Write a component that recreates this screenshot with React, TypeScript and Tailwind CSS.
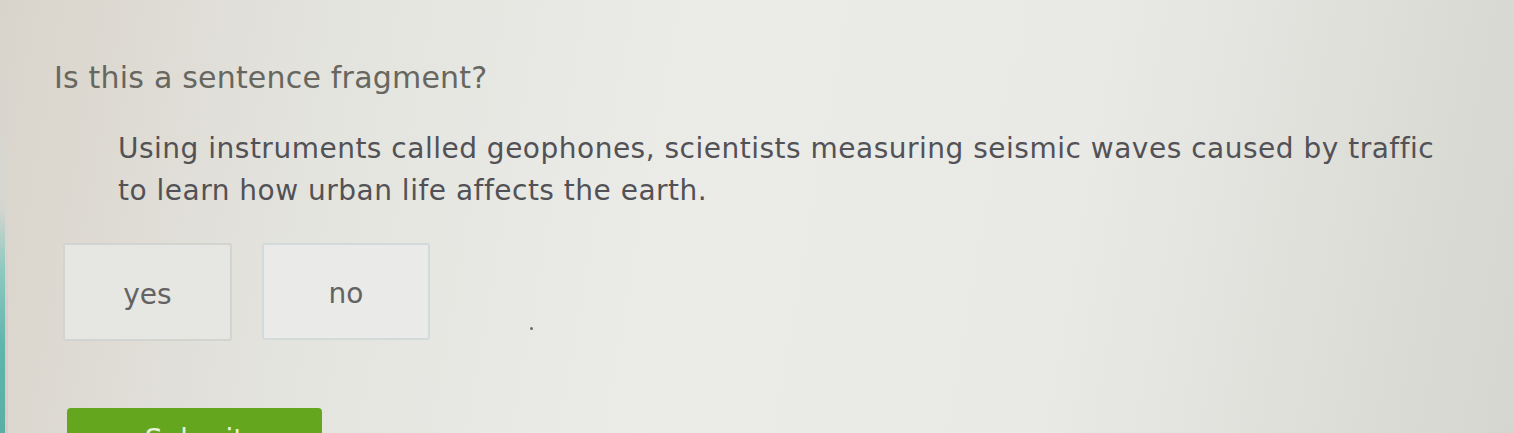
import React from "react";

const font = { fontFamily: '"DejaVu Sans", Verdana, sans-serif' };

export default function App() {
  return (
    <div
      className="relative flex h-[433px] w-[1514px] overflow-hidden bg-[linear-gradient(100deg,#d9d4cb_0%,#e4e4df_22%,#ebebe8_45%,#e9e9e6_70%,#d6d6d0_100%)]"
      style={font}
    >
      {/* bezel edge on the left */}
      <div className="w-[5px] shrink-0 bg-[linear-gradient(180deg,#d9d4cb_0%,#d6d6d0_48%,#8fc9bf_62%,#5fb5ac_80%,#5aaea6_100%)]" />
      <div className="w-[3px] shrink-0 bg-[linear-gradient(180deg,#d9d4cb_0%,#d8d6d2_55%,#dcc9c9_75%,#dcc9c9_100%)]" />

      <div className="flex flex-1 flex-col pl-[46px] pt-[59px]">
        <h1 className="text-[30px] leading-[38px] tracking-[0.2px] text-[#67675f]">
          Is this a sentence fragment?
        </h1>

        <p className="ml-[64px] mt-[31px] w-[1360px] text-[28px] leading-[42px] tracking-[0.5px] text-[#525256]">
          Using instruments called geophones, scientists measuring seismic waves caused by traffic
          <br />
          to learn how urban life affects the earth.
        </p>

        <div className="ml-[9px] mt-[31px] flex gap-[30px]">
          <button className="flex h-[98px] w-[169px] items-center justify-center rounded-[3px] border-2 border-[#d2d4d2] bg-[#e6e6e3] pt-[6px] text-[28px] text-[#636363]">
            yes
          </button>
          <button className="flex h-[97px] w-[168px] items-center justify-center rounded-[3px] border-2 border-[#d3dada] bg-[#eaeae9] pt-[4px] text-[28px] text-[#636363]">
            no
          </button>
        </div>

        <div className="ml-[13px] mt-[67px] flex h-[48px] w-[255px] shrink-0 items-start justify-center rounded-t-[4px] bg-[#64a71f] pt-[16px] text-[28px] leading-[32px] text-[#e8f3dc]">
          Submit
        </div>
      </div>

      {/* stray speck on the glass */}
      <div className="absolute left-[530px] top-[327px] h-[3px] w-[3px] rounded-full bg-[#6a6a6a]" />
    </div>
  );
}
